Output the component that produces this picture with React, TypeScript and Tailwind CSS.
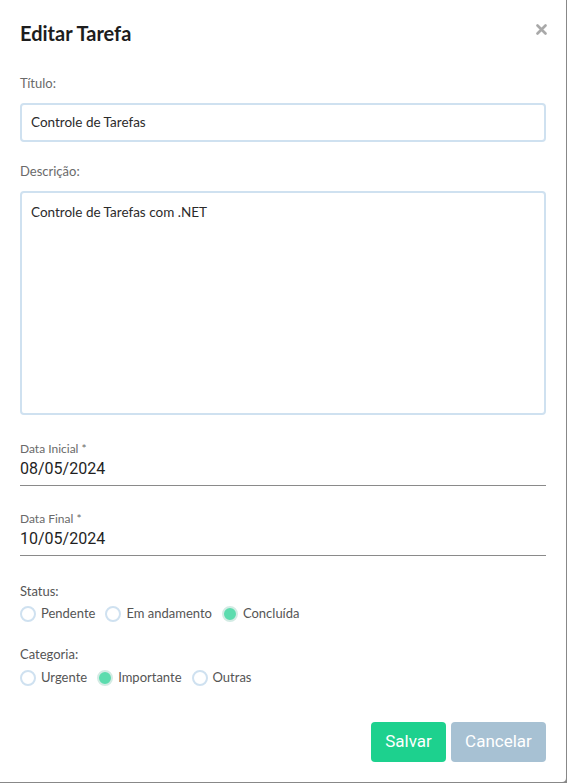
import { useState } from 'react';

const font = { fontFamily: 'Lato, "Noto Sans", sans-serif' };

interface RadioProps {
  label: string;
  checked: boolean;
  onClick: () => void;
}

const Radio = ({ label, checked, onClick }: RadioProps) => (
  <button type="button" onClick={onClick} className="flex items-center gap-[5px] mr-[10px]">
    <span
      className={`w-[16px] h-[16px] rounded-full border-2 ${checked ? 'border-[#d3ebe4] bg-[#5cdcae]' : 'border-[#cfe1f0] bg-white'}`}
    />
    <span className="text-[13px] text-[#555]">{label}</span>
  </button>
);

export default function App() {
  const [status, setStatus] = useState('Concluída');
  const [categoria, setCategoria] = useState('Importante');

  return (
    <div className="w-[567px] h-[783px] bg-[#888]" style={font}>
      <div className="w-[566px] h-[782px] bg-white rounded-br-[4px] px-[20px] pt-[22px] flex flex-col">
        {/* header */}
        <div className="flex items-start justify-between h-[22px]">
          <h2 className="text-[20px] font-bold text-[#1d1d1d] leading-[22px]">Editar Tarefa</h2>
          <svg width="11" height="11" viewBox="0 0 11 11" className="mt-[2px] mr-[-1px]">
            <path d="M1.5 1.5 L9.5 9.5 M9.5 1.5 L1.5 9.5" stroke="#a9a9a9" strokeWidth="2.6" strokeLinecap="round" />
          </svg>
        </div>

        <label className="mt-[31px] text-[13px] text-[#6a6a6a] leading-[16px]">Título:</label>
        <div className="mt-[12px] h-[39px] border-2 border-[#cfe1f0] rounded-[4px] flex items-center px-[9px] text-[13.5px] text-[#2b2b2b]">
          Controle de Tarefas
        </div>

        <label className="mt-[21px] text-[13px] text-[#6a6a6a] leading-[16px]">Descrição:</label>
        <div className="mt-[12px] h-[224px] border-2 border-[#cfe1f0] rounded-[4px] px-[9px] pt-[9px] text-[13.5px] text-[#2b2b2b]">
          Controle de Tarefas com .NET
        </div>

        <label className="mt-[27px] text-[12px] text-[#6a6a6a] leading-[14px]">Data Inicial *</label>
        <div
          className="mt-[3px] pb-[6px] border-b border-[#8a8a8a] text-[16px] text-[#1f1f1f] leading-[20px]"
          style={{ fontFamily: 'Roboto, sans-serif' }}
        >
          08/05/2024
        </div>

        <label className="mt-[26px] text-[12px] text-[#6a6a6a] leading-[14px]">Data Final *</label>
        <div
          className="mt-[3px] pb-[6px] border-b border-[#8a8a8a] text-[16px] text-[#1f1f1f] leading-[20px]"
          style={{ fontFamily: 'Roboto, sans-serif' }}
        >
          10/05/2024
        </div>

        <label className="mt-[27px] text-[13px] text-[#555] leading-[16px]">Status:</label>
        <div className="mt-[5px] flex items-center h-[20px]">
          {['Pendente', 'Em andamento', 'Concluída'].map((s) => (
            <Radio key={s} label={s} checked={status === s} onClick={() => setStatus(s)} />
          ))}
        </div>

        <label className="mt-[22px] text-[13px] text-[#555] leading-[16px]">Categoria:</label>
        <div className="mt-[6px] flex items-center h-[20px]">
          {['Urgente', 'Importante', 'Outras'].map((c) => (
            <Radio key={c} label={c} checked={categoria === c} onClick={() => setCategoria(c)} />
          ))}
        </div>

        <div className="mt-[34px] flex justify-end gap-[5px]" style={{ fontFamily: 'Roboto, sans-serif' }}>
          <button className="w-[75px] h-[40px] rounded-[4px] bg-[#1dd18e] text-white text-[17px]">Salvar</button>
          <button className="w-[95px] h-[40px] rounded-[4px] bg-[#a7c1d3] text-white text-[17px]">Cancelar</button>
        </div>
      </div>
    </div>
  );
}
